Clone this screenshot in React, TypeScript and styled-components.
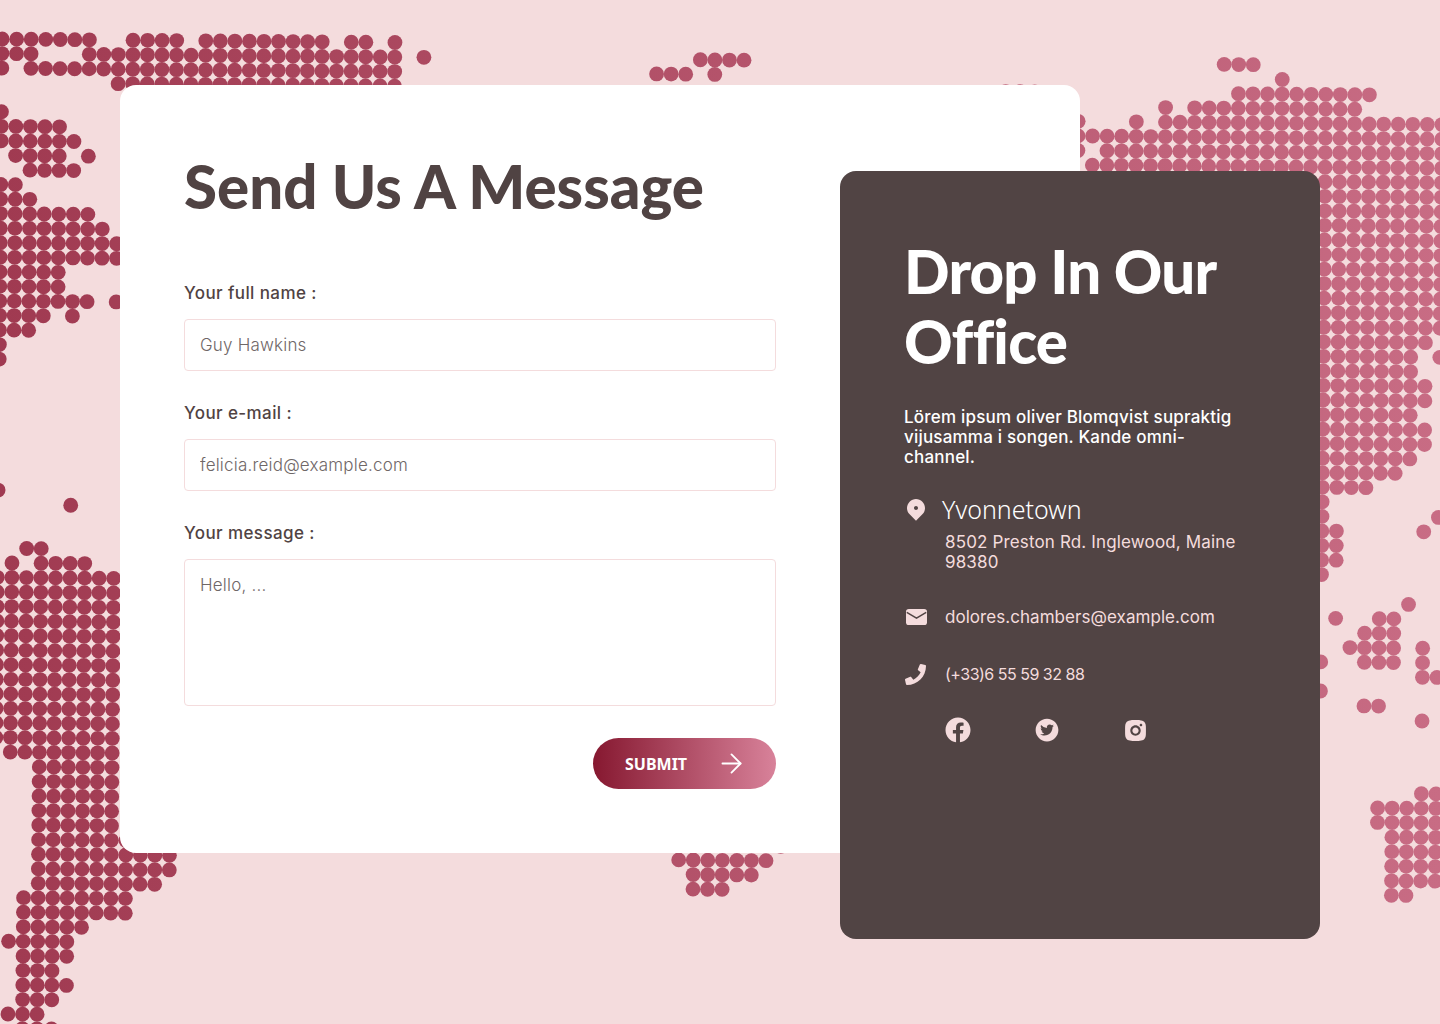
import React from 'react'
import styled, { createGlobalStyle } from 'styled-components'
import { ArrowRight } from 'lucide-react'
import { RiMapPin2Fill, RiFacebookCircleFill, RiInstagramFill } from 'react-icons/ri'
import { AiFillTwitterCircle } from 'react-icons/ai'
import { FaPhone } from 'react-icons/fa'

const GlobalStyle = createGlobalStyle`
  html, body {
    margin: 0;
    padding: 0;
    background: #f4dcdd;
  }
  * {
    box-sizing: border-box;
  }
`

const bodyFont = `Inter, 'Noto Sans', sans-serif`
const headFont = `Lato, 'Noto Sans', sans-serif`
const buttonFont = `'Noto Sans', 'Open Sans', sans-serif`

const Stage = styled.main`
  position: relative;
  width: 1440px;
  height: 1024px;
  overflow: hidden;
  background: #f4dcdd;
  padding: 85px 120px 0;
  display: flex;
  align-items: flex-start;
  font-family: ${bodyFont};
`

const MapLayer = styled.svg`
  position: absolute;
  top: 0;
  left: 0;
`

const FormCard = styled.section`
  position: relative;
  flex: 0 0 960px;
  height: 768px;
  padding: 66px 304px 0 64px;
  background: #fff;
  border-radius: 16px;
`

const Title = styled.h1`
  margin: 0;
  font-family: ${headFont};
  font-size: 60px;
  line-height: 70px;
  font-weight: 900;
  color: #504343;
  white-space: nowrap;
`

const Form = styled.form`
  display: flex;
  flex-direction: column;
  margin-top: 62px;
`

const Field = styled.label`
  display: flex;
  flex-direction: column;
  gap: 16px;
  margin-bottom: 32px;
`

const LabelText = styled.span`
  height: 20px;
  font-size: 17px;
  line-height: 20px;
  font-weight: 500;
  letter-spacing: 0.4px;
  color: #504343;
`

const fieldStyles = `
  width: 100%;
  padding: 0 15px;
  border: 1px solid #f4dcdd;
  border-radius: 4px;
  background: #fff;
  outline: none;
  font-family: ${bodyFont};
  font-size: 17px;
  font-weight: 300;
  letter-spacing: 0.2px;
  color: #504343;

  &::placeholder {
    color: #6f6767;
    opacity: 1;
  }
`

const TextInput = styled.input`
  ${fieldStyles}
  height: 52px;
`

const TextArea = styled.textarea`
  ${fieldStyles}
  display: block;
  height: 147px;
  padding-top: 15px;
  line-height: 20px;
  resize: none;
`

const SubmitRow = styled.div`
  display: flex;
  justify-content: flex-end;
`

const SubmitButton = styled.button`
  display: flex;
  align-items: center;
  justify-content: space-between;
  width: 183px;
  height: 51px;
  padding: 0 29px 0 32px;
  border: 0;
  border-radius: 26px;
  background: linear-gradient(90deg, #861830 0%, #d8829a 100%);
  font-family: ${buttonFont};
  font-size: 16px;
  font-weight: 700;
  color: #fff;
`

const OfficeCard = styled.aside`
  position: relative;
  flex: 0 0 480px;
  height: 768px;
  margin: 86px 0 0 -240px;
  padding: 65px 64px 0;
  background: #514444;
  border-radius: 16px;
  color: #fff;
`

const OfficeTitle = styled.h2`
  margin: 0;
  font-family: ${headFont};
  font-size: 60px;
  line-height: 70px;
  font-weight: 900;
  letter-spacing: -0.8px;
  color: #fff;
`

const Intro = styled.p`
  max-width: 340px;
  margin: 31px 0 0;
  font-size: 17px;
  line-height: 20px;
  font-weight: 500;
  letter-spacing: 0.2px;
  color: #fff;
`

const City = styled.div`
  display: flex;
  align-items: center;
  gap: 14px;
  margin-top: 25px;
  height: 34px;
  font-family: ${buttonFont};
  font-size: 25px;
  font-weight: 300;
  color: #fff;
`

const ContactLine = styled.div`
  display: grid;
  grid-template-columns: 41px 1fr;
  align-items: center;
  margin-top: 33px;
  font-size: 17px;
  line-height: 20px;
  font-weight: 400;
  letter-spacing: 0.05px;
  color: #f4dcdd;
`

const PhoneLine = styled(ContactLine)`
  font-size: 16px;
  letter-spacing: -0.5px;
`

const Address = styled.div`
  margin: 6px 0 0 41px;
  font-size: 17px;
  line-height: 20px;
  font-weight: 400;
  letter-spacing: 0.15px;
  color: #f4dcdd;
`

const IconSlot = styled.span`
  display: flex;
  align-items: center;
  height: 24px;
  color: #f4dcdd;
`

const Socials = styled.div`
  display: flex;
  align-items: center;
  margin: 29px 0 0 39px;
  color: #f4dcdd;
`

const SocialLink = styled.a<{ $width: number }>`
  display: flex;
  flex: 0 0 ${(p) => p.$width}px;
  color: inherit;
`

const MailIcon = () => (
  <svg width="21" height="18" viewBox="0 0 22 18" style={{ marginLeft: 2 }}>
    <rect x="0" y="0.5" width="22" height="17" rx="3" fill="currentColor" />
    <path d="M0.8 4.2 L11 10.2 L21.2 4.2" fill="none" stroke="#514444" strokeWidth="1.6" />
  </svg>
)

// dot map rows: row index -> column ranges on the slightly rotated grid
const mapRows: Record<number, string> = {
  0: '0-6 9-12 14-22 24-25 27',
  1: '0-2 6-27 29 48-51 84-86',
  2: '0 2-27 45-47 49 88',
  3: '8-27 69-71 85-94',
  4: '80 82-93',
  5: '0 74 78 80-99',
  6: '0-4 74-99',
  7: '0-5 74 76-99',
  8: '1-4 6 75-99',
  9: '2-5 85-99',
  10: '0-1 88-99',
  11: '0-2 90-99',
  12: '0-6 90-99',
  13: '0-7 90-99',
  14: '0-8 90-99',
  15: '0-8 90-99',
  16: '0-4 90-99',
  17: '0-4 90-99',
  18: '0-6 8 90-99',
  19: '0-3 5 90-99',
  20: '0-2 90-98',
  21: '0 90-97 99',
  22: '0 90-97',
  23: '90-98',
  24: '90-98',
  25: '90-97',
  26: '90-98',
  27: '90-98',
  28: '90-97',
  29: '90-96',
  30: '90-94',
  31: '0 91',
  32: '5 91 99',
  33: '91-92 98',
  34: '91-92',
  35: '2-3 91-92',
  36: '1 3-6 91',
  37: '0-8',
  38: '0-8 97',
  39: '0-8 92 95-96',
  40: '0-8 94-96',
  41: '0-8 93-96 98',
  42: '0-8 91 94-96 98',
  43: '0-8 98-99',
  44: '0-8 91',
  45: '0-8 94-95',
  46: '0-8 98',
  47: '0-8',
  48: '0-8',
  49: '1-8',
  50: '3-8',
  51: '3-8 98-99',
  52: '3-8 95-99',
  53: '3-8 95-99',
  54: '3-8 96-99',
  55: '3-9 54 96-99',
  56: '3-12 47-53 96-99',
  57: '3-12 48-52 96-99',
  58: '3-11 48-50 96-97',
  59: '2-9',
  60: '2-9',
  61: '2-6',
  62: '1-5',
  63: '2-5',
  64: '2-4',
  65: '2-5',
  66: '2-4',
  67: '1-3',
  68: '2-4',
}

const PITCH = 14.55
const TILT = 0.1295

const dots = Object.entries(mapRows).flatMap(([row, ranges]) =>
  ranges.split(' ').flatMap((range) => {
    const [from, to = from] = range.split('-').map(Number)
    const r = Number(row)
    return Array.from({ length: to - from + 1 }, (_, i) => {
      const c = from + i
      return {
        key: `${r}-${c}`,
        x: 2.1 + PITCH * c - TILT * r,
        y: 39 + PITCH * r + TILT * c,
      }
    })
  })
)

const DotMap = () => (
  <MapLayer width="1440" height="1024" viewBox="0 0 1440 1024" aria-hidden="true">
    <defs>
      <linearGradient id="mapFill" gradientUnits="userSpaceOnUse" x1="0" y1="0" x2="1440" y2="0">
        <stop offset="0" stopColor="#a03a51" />
        <stop offset="1" stopColor="#c86c84" />
      </linearGradient>
    </defs>
    <g fill="url(#mapFill)">
      {dots.map((d) => (
        <circle key={d.key} cx={d.x} cy={d.y} r="7.4" />
      ))}
    </g>
  </MapLayer>
)

const App = () => (
  <Stage>
    <GlobalStyle />
    <DotMap />
    <FormCard>
      <Title>Send Us A Message</Title>
      <Form onSubmit={(e) => e.preventDefault()}>
        <Field>
          <LabelText>Your full name :</LabelText>
          <TextInput type="text" placeholder="Guy Hawkins" />
        </Field>
        <Field>
          <LabelText>Your e-mail :</LabelText>
          <TextInput type="email" placeholder="felicia.reid@example.com" />
        </Field>
        <Field>
          <LabelText>Your message :</LabelText>
          <TextArea placeholder="Hello, ..." />
        </Field>
        <SubmitRow>
          <SubmitButton type="submit">
            SUBMIT
            <ArrowRight size={31} strokeWidth={1.4} />
          </SubmitButton>
        </SubmitRow>
      </Form>
    </FormCard>
    <OfficeCard>
      <OfficeTitle>
        Drop In Our
        <br />
        Office
      </OfficeTitle>
      <Intro>
        Lörem ipsum oliver Blomqvist supraktig vijusamma i songen. Kande omni-channel.
      </Intro>
      <City>
        <IconSlot>
          <RiMapPin2Fill size={24} />
        </IconSlot>
        Yvonnetown
      </City>
      <Address>8502 Preston Rd. Inglewood, Maine 98380</Address>
      <ContactLine>
        <IconSlot>
          <MailIcon />
        </IconSlot>
        dolores.chambers@example.com
      </ContactLine>
      <PhoneLine>
        <IconSlot>
          <FaPhone size={21} style={{ marginLeft: 1 }} />
        </IconSlot>
        (+33)6 55 59 32 88
      </PhoneLine>
      <Socials>
        <SocialLink $width={91} href="#">
          <RiFacebookCircleFill size={30} />
        </SocialLink>
        <SocialLink $width={89} href="#">
          <AiFillTwitterCircle size={26} />
        </SocialLink>
        <SocialLink $width={40} href="#">
          <RiInstagramFill size={25} />
        </SocialLink>
      </Socials>
    </OfficeCard>
  </Stage>
)

export default App
